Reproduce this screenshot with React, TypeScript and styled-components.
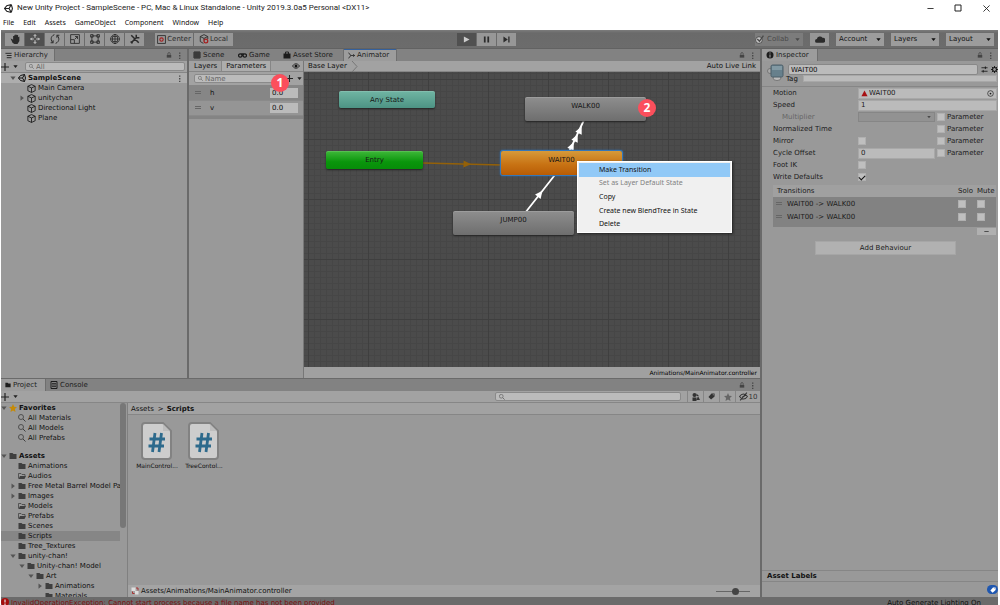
import React from "react";
import styled, { createGlobalStyle, css } from "styled-components";

const UI = `"DejaVu Sans", "Noto Sans", sans-serif`;
const OS = `"Noto Sans", "Open Sans", sans-serif`;

const Global = createGlobalStyle`
  * { box-sizing: border-box; }
  html, body, #root { height: 100%; }
  body { margin: 0; overflow: hidden; background: #fff; }
  button, input, select { font: inherit; color: inherit; margin: 0; padding: 0; border: 0; border-radius: 0; background: none; }
  svg { display: block; flex: none; }
  ul { list-style: none; margin: 0; padding: 0; }
  a { color: inherit; text-decoration: none; }
`;

/* ---------- window frame ---------- */
const Window = styled.div`
  height: 100vh; display: flex; flex-direction: column; padding: 0 2px 0 1px;
  font: 7px/10px ${UI}; color: #111; background: #fff; white-space: nowrap;
`;
const TitleBar = styled.header`
  height: 16px; display: flex; align-items: center; gap: 4px; padding: 0 6px 0 3px;
  font: 8px/10px Roboto, ${OS}; color: #222;
`;
const TitleText = styled.h1`margin: 0; font: inherit; flex: 1;`;
const WindowButton = styled.button`width: 28px; height: 14px; display: grid; place-items: center;`;
const WindowButtons = styled.div`display: flex; margin-right: -8px;`;
const MenuBar = styled.nav`
  height: 14px; display: flex; align-items: center; gap: 9px; padding: 0 2px; font: 7px/10px ${OS};
`;

/* ---------- main toolbar ---------- */
const Toolbar = styled.div`
  height: 19px; display: grid; grid-template-columns: 1fr auto 1fr; align-items: center;
  background: linear-gradient(#7c7c7c, #6a6a6a 3px, #6c6c6c); padding: 0 4px; border-bottom: 1px solid #626262;
`;
const ToolGroup = styled.div<{ $gap?: number; $end?: boolean }>`
  display: flex; gap: ${p => p.$gap ?? 1}px; ${p => p.$end && "justify-content: flex-end;"}
`;
const Transport = styled(ToolGroup)`margin-right: 26px;`;
const ToolButton = styled.button<{ $on?: boolean; $w?: number }>`
  width: ${p => p.$w ?? 19}px; height: 13px; display: flex; align-items: center; justify-content: center; gap: 1px;
  background: ${p => (p.$on ? "#505050" : "#979797")}; color: ${p => (p.$on ? "#ccc" : "#2b2b2b")};
`;
const Spacer = styled.span<{ $w?: number }>`${p => (p.$w ? `width: ${p.$w}px;` : "flex: 1;")}`;
const SelectBox = styled.label<{ $dim?: boolean }>`
  width: 48px; height: 13px; position: relative; display: flex; align-items: center;
  background: ${p => (p.$dim ? "#7c7c7c" : "#9c9c9c")}; color: ${p => (p.$dim ? "#4a4a4a" : "#111")};
  select { appearance: none; flex: 1; min-width: 0; padding-left: 3px; outline: none; }
  svg:last-child { position: absolute; right: 3px; pointer-events: none; }
`;

/* ---------- docked panels ---------- */
const Workspace = styled.main`
  flex: 1; min-height: 0; display: grid; grid-template-columns: 1fr 236px; gap: 2px; background: #6a6a6a;
`;
const LeftArea = styled.div`
  display: grid; grid-template-rows: 330fr 218fr; gap: 1px; min-width: 0; min-height: 0;
`;
const TopArea = styled.div`display: grid; grid-template-columns: 186px 1fr; gap: 2px; min-width: 0; min-height: 0;`;
const Panel = styled.section`
  display: flex; flex-direction: column; min-width: 0; min-height: 0; background: #999;
`;
const TabStrip = styled.div`
  height: 12px; display: flex; align-items: stretch; background: #828282; color: #1c1c1c; flex: none;
`;
const Tab = styled.button<{ $active?: boolean; $focus?: boolean; $w: number }>`
  width: ${p => p.$w}px; display: flex; align-items: center; gap: 2px; padding-left: 4px; flex: none;
  background: ${p => (p.$active ? "#9c9c9c" : "none")};
  ${p => p.$active && "border-right: 1px solid #6e6e6e;"}
  ${p => p.$focus && "box-shadow: inset 0 1px #34609c; border-left: 1px solid #6e6e6e;"}
`;
const StripIcons = styled.div`display: flex; align-items: center; gap: 4px; margin-left: auto; padding-right: 4px; color: #444;`;
const Bar = styled.div<{ $h?: number }>`
  height: ${p => p.$h ?? 12}px; display: flex; align-items: center; background: #a2a2a2; border-bottom: 1px solid #868686; flex: none;
`;
const SearchField = styled.label`
  display: flex; align-items: center; gap: 2px; height: 9px; padding: 0 3px; min-width: 0;
  background: #bbb; border: 1px solid #8a8a8a; border-radius: 2px; color: #555;
  input { min-width: 0; width: 100%; height: 7px; outline: none; line-height: 7px; }
  input::placeholder { color: #666; opacity: 1; }
`;
const AddButton = styled.button`display: flex; align-items: center; gap: 4px; color: #222;`;

/* ---------- tree rows ---------- */
const Row = styled.li<{ $d?: number; $bold?: boolean; $bg?: string }>`
  height: 10px; display: flex; align-items: center; gap: 2px; padding-left: ${p => (p.$d ?? 0) * 9}px;
  font-weight: ${p => (p.$bold ? 700 : 400)}; background: ${p => p.$bg ?? "none"}; overflow: hidden;
`;
const Fold = styled.span`width: 6px; display: flex; justify-content: center; color: #555; flex: none;`;

/* ---------- animator ---------- */
const AnimatorBody = styled.div`flex: 1; min-height: 0; display: grid; grid-template-columns: 115px 1fr;`;
const Side = styled.div`display: flex; flex-direction: column; border-right: 1px solid #777; position: relative; background: #999;`;
const SubTab = styled.button<{ $active?: boolean }>`
  height: 100%; padding: 0 4px; ${p => p.$active && "background: #adadad; border: solid #868686; border-width: 0 1px;"}
`;
const ParamRow = styled.label<{ $sel?: boolean }>`
  height: 15px; display: flex; align-items: center; padding: 0 5px 0 3px; gap: 4px;
  background: ${p => (p.$sel ? "#868686" : "#959595")}; border-bottom: 1px solid #8a8a8a;
  input { margin-left: auto; width: 28px; height: 10px; background: #bbb; padding-left: 2px; }
`;
const ParamFoot = styled.div`height: 3px; background: #848484;`;
const Graph = styled.div`display: flex; flex-direction: column; min-width: 0;`;
const line = (c: string, s: number) =>
  `linear-gradient(${c} 1px, transparent 1px) 0 7px / ${s}px ${s}px, linear-gradient(90deg, ${c} 1px, transparent 1px) 4px 0 / ${s}px ${s}px`;
const Canvas = styled.div`
  flex: 1; position: relative; overflow: hidden;
  background: ${line("#3f3f3f", 60)}, ${line("#464646", 6)}, #4b4b4b;
  > svg { position: absolute; left: 0; top: 0; }
`;
const tones = {
  teal: "linear-gradient(#70b5a3, #4d9384)",
  green: "linear-gradient(#3fb83a, #0a960c 60%, #078d09)",
  gray: "linear-gradient(#8e8e8e, #6e6e6e)",
  orange: "linear-gradient(#d69a3a, #c87314 55%, #b85c05)",
};
const Node = styled.button<{ $x: number; $y: number; $w: number; $h: number; $tone: keyof typeof tones; $sel?: boolean }>`
  position: absolute; left: ${p => p.$x}px; top: ${p => p.$y}px; width: ${p => p.$w}px; height: ${p => p.$h}px;
  display: flex; justify-content: center; align-items: flex-start; padding-top: 4px;
  background: ${p => tones[p.$tone]}; border-radius: 2px; color: #151515;
  box-shadow: ${p => (p.$sel ? "0 0 0 1px #3577b8, 0 0 2px 1px #2a6cae" : "0 1px 2px #222, inset 0 1px #ffffff22")};
`;
const ContextMenu = styled.div`
  position: absolute; left: 273px; top: 89px; width: 155px; height: 72px; padding: 1px; display: flex; flex-direction: column;
  background: #f0f0f0; border: 1px solid #fff; box-shadow: 1px 1px 2px #222; font: 7px/10px ${OS};
`;
const MenuItem = styled.button<{ $hot?: boolean }>`
  flex: 1; text-align: left; padding-left: 20px; background: ${p => (p.$hot ? "#91c9f7" : "none")};
  color: #111; &:disabled { color: #808080; }
`;
const Badge = styled.span<{ $x: number; $y: number }>`
  position: absolute; left: ${p => p.$x}px; top: ${p => p.$y}px; width: 18px; height: 18px; border-radius: 50%; z-index: 2;
  display: grid; place-items: center; background: #fb4f5c; color: #fff; font: 700 12px/18px ${OS};
`;
const PathBar = styled.div`
  height: 11px; flex: none; display: flex; justify-content: flex-end; align-items: center; padding-right: 3px; background: #a0a0a0;
  font-size: 6px; color: #000;
`;

/* ---------- project ---------- */
const ProjectBody = styled.div`flex: 1; min-height: 0; display: grid; grid-template-columns: 127px 1fr;`;
const TreePane = styled.div`
  display: grid; grid-template-columns: 1fr 7px; overflow: hidden; border-right: 1px solid #808080; min-height: 0;
  ul { overflow: hidden; }
`;
const ScrollThumb = styled.div`height: 125px; background: #777; border-radius: 3px; margin-right: 1px;`;
const IconButton = styled.button`
  width: 16px; height: 11px; display: flex; align-items: center; justify-content: center; gap: 1px; border-left: 1px solid #868686; color: #333;
`;
const Files = styled.div`flex: 1; display: flex; gap: 1px; padding: 6px; align-items: flex-start;`;
const FileCard = styled.a`width: 46px; display: flex; flex-direction: column; align-items: center; font-size: 6px;`;
const FilesPane = styled.div`display: flex; flex-direction: column; min-width: 0;`;
const FootBar = styled.div`height: 12px; display: flex; align-items: center; gap: 2px; padding: 0 10px 0 3px; background: #a4a4a4;
  input { appearance: none; width: 34px; height: 7px; margin-left: auto; background: linear-gradient(#666, #666) center / 100% 1px no-repeat; }
  input::-webkit-slider-thumb { appearance: none; width: 7px; height: 7px; border-radius: 50%; background: #444; }
`;

/* ---------- inspector ---------- */
const field = css`background: #bbb; border: 1px solid #a8a8a8; height: 11px; padding-left: 2px; min-width: 0; outline: none;`;
const Field = styled.input`${field}`;
const InspectorHead = styled.div`
  height: 26px; display: grid; grid-template-columns: 21px 1fr; padding: 3px 0 0 5px; border-bottom: 1px solid #868686; overflow: hidden; flex: none;
`;
const HeadFields = styled.div`display: flex; flex-direction: column; min-width: 0;`;
const NameLine = styled.div`display: flex; align-items: center; gap: 3px; ${Field} { flex: 1; border-color: #888; border-radius: 2px; }`;
const TagLine = styled.label`display: flex; height: 7px; align-items: center; gap: 5px; ${Field} { flex: 1; height: 7px; margin-right: 1px; }
  span { margin-left: -2px; }
`;
const Props = styled.div`display: flex; flex-direction: column; padding: 0 1px 2px 11px;`;
const PropRow = styled.div<{ $dim?: boolean }>`
  height: 12px; display: grid; grid-template-columns: 83px 77px 1fr; align-items: center; gap: 2px; color: ${p => (p.$dim ? "#666" : "#1c1c1c")};
`;
const PropLabel = styled.label<{ $indent?: boolean }>`padding-left: ${p => (p.$indent ? 9 : 0)}px;`;
const Wide = styled.div`
  grid-column: 2 / 4; display: flex; align-items: center; ${field} padding-right: 2px; gap: 1px;
  input { flex: 1; min-width: 0; height: 9px; outline: none; }
`;
const DimSelect = styled(SelectBox)`width: 77px; height: 10px; background: #929292; border: 1px solid #868686;`;
const Check = styled.input.attrs({ type: "checkbox" })`
  appearance: none; width: 8px; height: 8px; background: #bfbfbf; border: 1px solid #b0b0b0; display: grid; place-items: center;
  &:checked::before { content: ""; width: 5px; height: 3px; border: solid #111; border-width: 0 0 1px 1px; transform: rotate(-45deg); }
`;
const ParamCheck = styled.label`display: flex; align-items: center; gap: 2px; color: #1c1c1c;`;
const Transitions = styled.table`
  margin: 0 2px 0 11px; border-collapse: collapse; table-layout: fixed; color: #1c1c1c;
  th { height: 12px; padding: 0; font-weight: 400; text-align: left; background: #a0a0a0; }
  td { height: 13px; padding: 0; background: #828282; }
  th:first-child { padding-left: 4px; }
  th:not(:first-child), td:not(:first-child) { width: 19px; }
`;
const TransitionsFoot = styled.div`height: 4px; margin: 0 2px 0 11px; background: #828282;`;
const Handle = styled.span`display: inline-block; width: 6px; height: 3px; border: solid #666; border-width: 1px 0; margin: 0 5px 1px 3px;`;
const RemoveButton = styled.button`align-self: flex-end; width: 19px; height: 7px; margin: 1px 2px 0 0; background: #b0b0b0; display: grid; place-items: center;`;
const AddBehaviour = styled.button`align-self: center; width: 141px; height: 14px; margin: 6px 0 0 11px; background: #b1b1b1; border: 1px solid #a6a6a6; color: #1c1c1c;`;
const Labels = styled.h2`
  margin: auto 0 0; height: 12px; padding-left: 5px; font: 700 7px/10px ${UI}; border: solid #868686; border-width: 1px 0;
`;
const LabelBody = styled.div`height: 15px; display: flex; justify-content: flex-end; align-items: center; flex: none;`;
const TagButton = styled.button`width: 11px; height: 9px; border-radius: 5px; background: #1f57b0; display: grid; place-items: center; color: #fff;`;

const StatusBar = styled.footer`
  height: 8px; flex: none; display: flex; align-items: flex-start; justify-content: space-between; gap: 3px; padding: 1px 17px 0 0;
  background: #6b6b6b; overflow: hidden; color: #111;
`;
const ErrorText = styled.span`color: #7c0f0f; display: flex; gap: 2px;`;

/* ---------- icons ---------- */
type IconName = keyof typeof shapes;
const s = { fill: "none", stroke: "currentColor" } as const;
const shapes = {
  unity: <path {...s} strokeWidth="2" d="M13 1 5 3 1 8l4 5 8 2M13 1l2 7-2 7M1 8h8M13 1 9 8l4 7" />,
  hand: <path fill="currentColor" d="M3 8 1 7l3 7 3 2h5l3-5V4l-2 1V2l-2-1v1L9 0v2L7 1v2L5 3v6z" />,
  move: <path {...s} strokeWidth="1.6" d="M8 1v5M8 10v5M1 8h5M10 8h5M6 3l2-2 2 2M6 13l2 2 2-2M3 6 1 8l2 2M13 6l2 2-2 2" />,
  rotate: <path {...s} strokeWidth="1.6" d="M7 1C0 4 1 11 5 14M1 14h4v-4M9 15c7-3 6-10 2-13M15 2h-4v4" />,
  scale: <path {...s} strokeWidth="1.4" d="M1 1h14v14H1zM1 9h6v6M8 8l4-4M8 4h4v4" />,
  rect: <path {...s} strokeWidth="1.4" d="M3 3h10v10H3zM1 1h4v4H1zM11 1h4v4h-4zM1 11h4v4H1zM11 11h4v4h-4z" />,
  multi: <path {...s} strokeWidth="1.3" d="M8 0v16M0 8h16M4 4h8v8H4zM8 1a7 7 0 1 0 .1 0M6 2l2-2 2 2M6 14l2 2 2-2" />,
  tools: <path {...s} strokeWidth="2.4" d="m2 14 9-9M2 2l12 12M10 1v5h5M1 12l3 3" />,
  pivot: <><path {...s} strokeWidth="1.5" d="M1 1h14v14H1z" /><circle cx="8" cy="8" r="3" fill="none" stroke="#a32020" strokeWidth="2" /></>,
  local: <><path {...s} strokeWidth="1.4" d="M8 1 2 4v8l5 3M8 1l6 3v4M2 4l6 3 6-3M8 7v3" /><circle cx="11" cy="11" r="3" fill="none" stroke="#a32020" strokeWidth="2" /></>,
  play: <path fill="currentColor" d="M2 1v14l13-7z" />,
  pause: <path fill="currentColor" d="M2 1h4v14H2zM10 1h4v14h-4z" />,
  step: <path fill="currentColor" d="M1 1v14l10-7zM12 1h3v14h-3z" />,
  check: <><circle cx="7" cy="9" r="6" fill="#c4c4c4" {...{ stroke: "#444", strokeWidth: 1.5 }} /><path {...s} strokeWidth="2.4" d="m4 7 4 4 7-10" /></>,
  cloud: <path fill="currentColor" d="M3 14a3 3 0 0 1 0-6 5 5 0 0 1 9-2 4 4 0 0 1 1 8z" />,
  caret: <path fill="currentColor" d="M1 4h14L8 13z" />,
  right: <path fill="currentColor" d="M4 1v14l9-7z" />,
  list: <path {...s} strokeWidth="2" d="M1 3h14M4 8h11M4 13h11" />,
  lock: <><path fill="currentColor" d="M2 8h12v7H2z" /><path {...s} strokeWidth="2" d="M5 8V5a3 3 0 0 1 6-1v4" /></>,
  dots: <path fill="currentColor" d="M7 1h3v3H7zM7 7h3v3H7zM7 13h3v3H7z" />,
  plus: <path {...s} strokeWidth="2.4" d="M8 0v16M0 8h16" />,
  search: <><circle cx="6" cy="6" r="5" {...s} strokeWidth="1.6" /><path {...s} strokeWidth="2" d="m10 10 5 5" /></>,
  cube: <path {...s} strokeWidth="1.4" d="M8 1 1.500 4v8L8 15l6.500-3V4zM1.500 4 8 7l6.500-3M8 7v8" />,
  grid: <path {...s} strokeWidth="1.8" d="M2 2h12v12H2zM6 2v12M10 2v12M2 6h12M2 10h12" />,
  game: <path {...s} strokeWidth="2.2" d="M4 5a3 3 0 1 0 .1 0M12 5a3 3 0 1 0 .1 0M4 5h8" />,
  bag: <><path fill="currentColor" d="M1 5h14v10H1z" /><path {...s} strokeWidth="1.8" d="M5 6V2h6v4" /></>,
  flow: <path {...s} strokeWidth="1.8" d="M1 2c3 0 3 6 6 6h8M1 14c3 0 3-6 6-6M12 5l3 3-3 3" />,
  eye: <><path {...s} strokeWidth="1.5" d="M1 8c4-6 10-6 14 0-4 6-10 6-14 0z" /><circle cx="8" cy="8" r="3" fill="currentColor" /></>,
  info: <><circle cx="8" cy="8" r="7" fill="currentColor" /><path stroke="#aaa" strokeWidth="2" d="M8 7v6M8 3v2" /></>,
  sliders: <path {...s} strokeWidth="1.8" d="M1 4h14M1 12h14M10 1v6M5 9v6" />,
  gear: <><circle cx="8" cy="8" r="4.5" {...s} strokeWidth="2.4" /><path {...s} strokeWidth="2" d="M8 0v4M8 12v4M0 8h4M12 8h4M2 2l3 3M11 11l3 3M14 2l-3 3M5 11l-3 3" /></>,
  clip: <path fill="#a80f12" d="M1 14 8 1l7 13z" />,
  target: <><circle cx="8" cy="8" r="6.5" {...s} strokeWidth="1.5" /><circle cx="8" cy="8" r="2" fill="currentColor" /></>,
  folder: <path fill="currentColor" d="M1 2h6l2 2h6v10H1z" />,
  folderOpen: <><path {...s} strokeWidth="1.5" d="M1 13V3h5l2 2h6v3" /><path fill="currentColor" d="M4 8h12l-3 6H1z" /></>,
  star: <path fill="currentColor" d="m8 0 2.400 5.300 5.600.600-4.200 3.900L13 16l-5-3-5 3 1.200-6.200L0 5.900l5.600-.600z" />,
  console: <><path {...s} strokeWidth="2" d="M2 1h12v14H2z" /><path {...s} strokeWidth="1.5" d="M4 5h8M4 8h8M4 11h8" /></>,
  kinds: <><circle cx="5" cy="4" r="4" fill="currentColor" /><path fill="currentColor" d="M1 9h8v7H1zM12 6l4 8H9zM9 1l5 5H9z" /></>,
  tag: <><path fill="currentColor" d="M8 1h7v7l-8 7-6-6z" /><circle cx="12" cy="4" r="1.300" fill="#a0a0a0" /></>,
  hidden: <path {...s} strokeWidth="1.8" d="M1 8c4-6 10-6 14 0-4 6-10 6-14 0zM2 15 14 1M6 8h4" />,
  error: <><circle cx="8" cy="8" r="8" fill="#a50d0d" /><path stroke="#ddd" strokeWidth="2.500" d="M8 3v6M8 11v3" /></>,
  controller: <><path fill="#ddd" d="M1 1h8v7H1zM8 8h7v7H8z" /><path fill="none" stroke="#a83030" strokeWidth="2" d="M3 9v4h4M10 2h4v5" /></>,
  min: <path {...s} strokeWidth="2" d="M1 8h14" />,
  max: <path {...s} strokeWidth="2" d="M2 2h12v12H2z" />,
  close: <path {...s} strokeWidth="2" d="m1 1 14 14M15 1 1 15" />,
};
const Icon = ({ n, z = 8 }: { n: IconName; z?: number }) => (
  <svg width={z} height={z} viewBox="0 0 16 16" aria-hidden="true">{shapes[n]}</svg>
);
const StateIcon = () => (
  <svg width="17" height="18" viewBox="0 0 17 18" aria-hidden="true">
    <circle cx="3" cy="7" r="2.500" fill="#aaa" stroke="#777" />
    <ellipse cx="10" cy="14" rx="4" ry="2.500" fill="#bbb" stroke="#777" />
    <rect x="4" y="1" width="12" height="12" rx="1.500" fill="#67808c" stroke="#4d5f69" />
    <path d="M5 2h10v4H5z" fill="#8299a3" />
  </svg>
);
const ScriptIcon = () => (
  <svg width="34" height="40" viewBox="0 0 34 40" aria-hidden="true">
    <path d="M5 2h18l8 8v25q0 3-3 3H5q-3 0-3-3V5q0-3 3-3z" fill="#cdcdcd" stroke="#828282" strokeWidth="2" />
    <path d="M23 3v7h7z" fill="#bdbdbd" />
    <path d="M15 12 12.500 31M21.500 12 19 31M9.500 18H25M8.500 25H24" stroke="#2d6a8c" strokeWidth="2.800" fill="none" />
  </svg>
);

const StripTools = () => <StripIcons><Icon n="lock" z={6} /><Icon n="dots" z={7} /></StripIcons>;
const Drop = ({ name }: { name: string }) => (
  <SelectBox>
    <select aria-label={name}><option>{name}</option></select><Icon n="caret" z={5} />
  </SelectBox>
);

const tools: IconName[] = ["hand", "move", "rotate", "scale", "rect", "multi", "tools"];
const hierarchy = [["Main Camera"], ["unitychan", "fold"], ["Directional Light"], ["Plane"]];
type TreeRow = { t: string; d: number; i: IconName; f?: "caret" | "right"; b?: boolean; sel?: boolean };
const favorites: TreeRow[] = [
  { t: "Favorites", d: 0, i: "star", f: "caret", b: true },
  { t: "All Materials", d: 1, i: "search" },
  { t: "All Models", d: 1, i: "search" },
  { t: "All Prefabs", d: 1, i: "search" },
];
const assets: TreeRow[] = [
  { t: "Assets", d: 0, i: "folder", f: "caret", b: true },
  { t: "Animations", d: 1, i: "folder" },
  { t: "Audios", d: 1, i: "folderOpen" },
  { t: "Free Metal Barrel Model Pack", d: 1, i: "folder", f: "right" },
  { t: "Images", d: 1, i: "folder", f: "right" },
  { t: "Models", d: 1, i: "folderOpen" },
  { t: "Prefabs", d: 1, i: "folderOpen" },
  { t: "Scenes", d: 1, i: "folder" },
  { t: "Scripts", d: 1, i: "folder", sel: true },
  { t: "Tree_Textures", d: 1, i: "folder" },
  { t: "unity-chan!", d: 1, i: "folder", f: "caret" },
  { t: "Unity-chan! Model", d: 2, i: "folder", f: "caret" },
  { t: "Art", d: 3, i: "folder", f: "caret" },
  { t: "Animations", d: 4, i: "folder", f: "right" },
  { t: "Materials", d: 4, i: "folder" },
];
const IconTint = styled.span<{ $c: string }>`color: ${p => p.$c}; display: flex;`;
const GapRow = styled.li`height: 8px;`;
const Tree = ({ rows }: { rows: TreeRow[] }) => (
  <>{rows.map((r, i) => (
    <Row key={i} $d={r.d} $bold={r.b} $bg={r.sel ? "#868686" : undefined}>
      <Fold>{r.f && <Icon n={r.f} z={6} />}</Fold>
      <IconTint $c={r.i === "star" ? "#c58a08" : "#3f3f3f"}><Icon n={r.i} /></IconTint>{r.t}
    </Row>
  ))}</>
);

const Arrow = ({ x, y, a, c = "#fff" }: { x: number; y: number; a: number; c?: string }) => (
  <path d="M-3.500-3.500 4 0-3.500 3.500z" fill={c} transform={`translate(${x} ${y}) rotate(${a})`} />
);
const ParameterBox = ({ row }: { row: string }) => (
  <ParamCheck><Check aria-label={`${row} parameter`} />Parameter</ParamCheck>
);
const HierarchySearch = styled(SearchField)`flex: 1; margin-right: 2px;`;
const ParameterSearch = styled(SearchField)`width: 90px;`;
const ProjectSearch = styled(SearchField)`width: 186px;`;
const HiddenCount = styled(IconButton)`width: 25px;`;

export default function App() {
  return (
    <Window>
      <Global />
      <TitleBar>
        <Icon n="unity" z={9} />
        <TitleText>New Unity Project - SampleScene - PC, Mac &amp; Linux Standalone - Unity 2019.3.0a5 Personal &lt;DX11&gt;</TitleText>
        <WindowButtons>
          <WindowButton aria-label="Minimize"><Icon n="min" z={7} /></WindowButton>
          <WindowButton aria-label="Maximize"><Icon n="max" z={8} /></WindowButton>
          <WindowButton aria-label="Close"><Icon n="close" z={7} /></WindowButton>
        </WindowButtons>
      </TitleBar>
      <MenuBar>
        {["File", "Edit", "Assets", "GameObject", "Component", "Window", "Help"].map(m => <a key={m} href="#">{m}</a>)}
      </MenuBar>
      <Toolbar>
        <ToolGroup>
          {tools.map(t => <ToolButton key={t} $on={t === "move"} aria-label={t}><Icon n={t} z={10} /></ToolButton>)}
          <Spacer $w={9} />
          <ToolButton $w={38}><Icon n="pivot" z={9} />Center</ToolButton>
          <ToolButton $w={39}><Icon n="local" z={10} />Local</ToolButton>
        </ToolGroup>
        <Transport>
          <ToolButton $on aria-label="Play"><Icon n="play" z={7} /></ToolButton>
          <ToolButton aria-label="Pause"><Icon n="pause" z={7} /></ToolButton>
          <ToolButton aria-label="Step"><Icon n="step" z={7} /></ToolButton>
        </Transport>
        <ToolGroup $gap={7} $end>
          <SelectBox $dim>
            <Icon n="check" z={9} />
            <select aria-label="Collab"><option>Collab</option></select><Icon n="caret" z={5} />
          </SelectBox>
          <ToolButton aria-label="Cloud services"><Icon n="cloud" z={10} /></ToolButton>
          <Drop name="Account" /><Drop name="Layers" /><Drop name="Layout" />
        </ToolGroup>
      </Toolbar>

      <Workspace>
        <LeftArea>
          <TopArea>
            <Panel>
              <TabStrip>
                <Tab $active $w={54}><Icon n="list" z={7} />Hierarchy</Tab>
                <StripTools />
              </TabStrip>
              <Bar>
                <AddButton aria-label="Create"><Icon n="plus" /><Icon n="caret" z={5} /></AddButton>
                <Spacer $w={7} />
                <HierarchySearch><Icon n="search" z={5} /><input placeholder="All" aria-label="Search hierarchy" /></HierarchySearch>
              </Bar>
              <ul>
                <Row $bold $bg="#adadad" $d={1}>
                  <Fold><Icon n="caret" z={6} /></Fold><Icon n="unity" />SampleScene
                  <StripIcons><Icon n="dots" z={7} /></StripIcons>
                </Row>
                {hierarchy.map(([t, f]) => (
                  <Row key={t} $d={2}><Fold>{f && <Icon n="right" z={6} />}</Fold><Icon n="cube" z={9} />{t}</Row>
                ))}
              </ul>
            </Panel>

            <Panel>
              <TabStrip>
                <Tab $w={45}><Icon n="grid" />Scene</Tab>
                <Tab $w={45}><Icon n="game" z={9} />Game</Tab>
                <Tab $w={64}><Icon n="bag" z={8} />Asset Store</Tab>
                <Tab $active $focus $w={54}><Icon n="flow" z={7} />Animator</Tab>
                <StripTools />
              </TabStrip>
              <AnimatorBody>
                <Side>
                  <Bar $h={11}>
                    <Spacer $w={1} /><SubTab>Layers</SubTab><SubTab $active>Parameters</SubTab>
                    <Spacer /><Icon n="eye" /><Spacer $w={3} />
                  </Bar>
                  <Bar $h={14}>
                    <Spacer $w={5} />
                    <ParameterSearch><Icon n="search" z={5} /><input placeholder="Name" aria-label="Search parameters" /></ParameterSearch>
                    <Spacer $w={2} />
                    <AddButton aria-label="Add parameter"><Icon n="plus" z={7} /><Icon n="caret" z={5} /></AddButton>
                  </Bar>
                  <ParamRow $sel><Handle />h<input defaultValue="0.0" /></ParamRow>
                  <ParamRow><Handle />v<input defaultValue="0.0" /></ParamRow>
                  <ParamFoot />
                  <Badge $x={82} $y={13}>1</Badge>
                </Side>
                <Graph>
                  <Bar $h={11}>
                    <Spacer $w={4} />Base Layer
                    <Spacer $w={4} />
                    <svg width="8" height="11" viewBox="0 0 8 11" aria-hidden="true"><path d="m1 0 5 5.500L1 11" fill="none" stroke="#777" /></svg>
                    <Spacer /><SubTab>Auto Live Link</SubTab>
                  </Bar>
                  <Canvas>
                    <svg width="456" height="295" aria-hidden="true">
                      <path d="M119 91 198 93" stroke="#946108" strokeWidth="1.500" />
                      <Arrow x={163} y={92} a={2} c="#946108" />
                      <path d="M221 141 254 99M265 80 280 48" stroke="#fff" strokeWidth="1.800" />
                      <Arrow x={236} y={122} a={-52} />
                      <Arrow x={268} y={74} a={-65} /><Arrow x={272} y={66} a={-65} /><Arrow x={276} y={58} a={-65} />
                    </svg>
                    <Node $x={35} $y={19} $w={96} $h={17} $tone="teal">Any State</Node>
                    <Node $x={22} $y={79} $w={97} $h={18} $tone="green">Entry</Node>
                    <Node $x={221} $y={25} $w={121} $h={24} $tone="gray">WALK00</Node>
                    <Node $x={197} $y={79} $w={121} $h={24} $tone="orange" $sel>WAIT00</Node>
                    <Node $x={149} $y={139} $w={121} $h={24} $tone="gray">JUMP00</Node>
                    <Badge $x={334} $y={27}>2</Badge>
                    <ContextMenu>
                      <MenuItem $hot>Make Transition</MenuItem>
                      <MenuItem disabled>Set as Layer Default State</MenuItem>
                      <MenuItem>Copy</MenuItem>
                      <MenuItem>Create new BlendTree in State</MenuItem>
                      <MenuItem>Delete</MenuItem>
                    </ContextMenu>
                  </Canvas>
                  <PathBar>Animations/MainAnimator.controller</PathBar>
                </Graph>
              </AnimatorBody>
            </Panel>
          </TopArea>

          <Panel>
            <TabStrip>
              <Tab $active $w={45}><Icon n="folder" z={6} />Project</Tab>
              <Tab $w={50}><Icon n="console" z={8} />Console</Tab>
              <StripTools />
            </TabStrip>
            <Bar>
              <AddButton aria-label="Create asset"><Icon n="plus" /><Icon n="caret" z={5} /></AddButton>
              <Spacer />
              <ProjectSearch><Icon n="search" z={6} /><input aria-label="Search project" /></ProjectSearch>
              <Spacer $w={6} />
              <IconButton aria-label="Filter by type"><Icon n="kinds" /></IconButton>
              <IconButton aria-label="Filter by label"><Icon n="tag" z={7} /></IconButton>
              <IconButton aria-label="Save search"><IconTint $c="#666"><Icon n="star" z={8} /></IconTint></IconButton>
              <HiddenCount><Icon n="hidden" z={9} />10</HiddenCount>
            </Bar>
            <ProjectBody>
              <TreePane>
                <ul><Tree rows={favorites} /><GapRow /><Tree rows={assets} /></ul>
                <ScrollThumb />
              </TreePane>
              <FilesPane>
                <Bar>
                  <Spacer $w={3} /><a href="#">Assets</a><Spacer $w={4} />&gt;<Spacer $w={3} /><b>Scripts</b>
                </Bar>
                <Files>
                  <FileCard href="#"><ScriptIcon />MainControl...</FileCard>
                  <FileCard href="#"><ScriptIcon />TreeContol...</FileCard>
                </Files>
                <FootBar><Icon n="controller" />Assets/Animations/MainAnimator.controller<input type="range" defaultValue={58} aria-label="Icon size" /></FootBar>
              </FilesPane>
            </ProjectBody>
          </Panel>
        </LeftArea>

        <Panel>
          <TabStrip>
            <Tab $active $w={56}><Icon n="info" z={8} />Inspector</Tab>
            <StripTools />
          </TabStrip>
          <InspectorHead>
            <StateIcon />
            <HeadFields>
              <NameLine><Field defaultValue="WAIT00" aria-label="State name" /><Icon n="sliders" z={7} /><Icon n="gear" z={7} /></NameLine>
              <TagLine><span>Tag</span><Field /></TagLine>
            </HeadFields>
          </InspectorHead>
          <Props>
            <PropRow><PropLabel htmlFor="motion">Motion</PropLabel><Wide><Icon n="clip" z={7} /><input id="motion" defaultValue="WAIT00" /><Icon n="target" z={7} /></Wide></PropRow>
            <PropRow><PropLabel htmlFor="speed">Speed</PropLabel><Wide><input id="speed" defaultValue="1" /></Wide></PropRow>
            <PropRow $dim><PropLabel $indent htmlFor="mult">Multiplier</PropLabel><DimSelect as="div" $dim><select id="mult" disabled /><Icon n="caret" z={4} /></DimSelect><ParameterBox row="Multiplier" /></PropRow>
            <PropRow><span>Normalized Time</span><span /><ParameterBox row="Normalized Time" /></PropRow>
            <PropRow><PropLabel htmlFor="mirror">Mirror</PropLabel><Check id="mirror" /><ParameterBox row="Mirror" /></PropRow>
            <PropRow><PropLabel htmlFor="cycle">Cycle Offset</PropLabel><Field id="cycle" defaultValue="0" /><ParameterBox row="Cycle Offset" /></PropRow>
            <PropRow><PropLabel htmlFor="foot">Foot IK</PropLabel><Check id="foot" /></PropRow>
            <PropRow><PropLabel htmlFor="wd">Write Defaults</PropLabel><Check id="wd" defaultChecked /></PropRow>
          </Props>
          <Transitions>
            <thead><tr><th>Transitions</th><th>Solo</th><th>Mute</th></tr></thead>
            <tbody>
              {[1, 2].map(k => (
                <tr key={k}><td><Handle />WAIT00 -&gt; WALK00</td><td><Check aria-label={`Solo ${k}`} /></td><td><Check aria-label={`Mute ${k}`} /></td></tr>
              ))}
            </tbody>
          </Transitions>
          <TransitionsFoot />
          <RemoveButton aria-label="Remove transition"><Icon n="min" z={5} /></RemoveButton>
          <AddBehaviour>Add Behaviour</AddBehaviour>
          <Labels>Asset Labels</Labels>
          <LabelBody><TagButton aria-label="Edit labels"><Icon n="tag" z={6} /></TagButton></LabelBody>
        </Panel>
      </Workspace>
      <StatusBar>
        <ErrorText><Icon n="error" />InvalidOperationException: Cannot start process because a file name has not been provided</ErrorText>
        <span>Auto Generate Lighting On</span>
      </StatusBar>
    </Window>
  );
}
